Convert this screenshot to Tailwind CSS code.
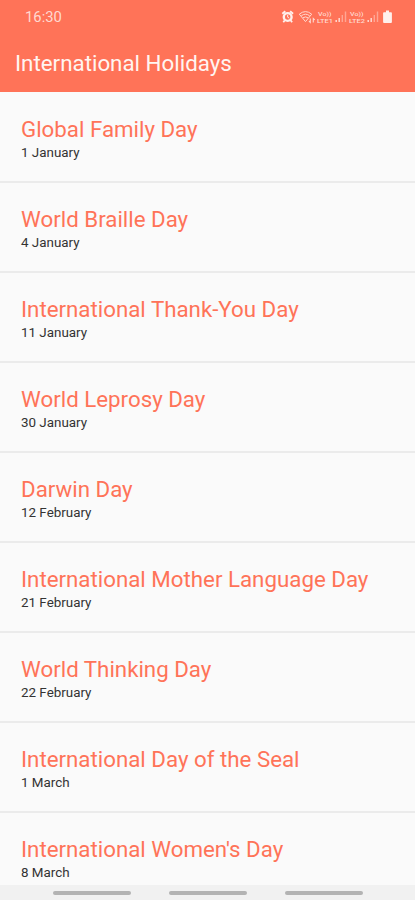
<!DOCTYPE html>
<html lang="en">
<head>
<meta charset="utf-8">
<title>International Holidays</title>
<script src="https://cdn.jsdelivr.net/npm/@tailwindcss/browser@4"></script>
</head>
<body class="h-[900px] overflow-hidden bg-[#fafafa] font-['Roboto',sans-serif]">
<div class="flex h-[900px] flex-col overflow-hidden">
<header class="h-[92px] shrink-0 bg-[#ff7358]">
  <div class="flex h-[34px] items-center justify-between pr-[22px] pl-[25px] text-[#ffd9d0]">
    <span class="text-[14.8px] leading-[34px]">16:30</span>
    <svg class="h-[34px] w-[112px]" viewBox="281 0 112 34" fill="none" stroke="currentColor">
      <g stroke="#fff0ec"><circle cx="287.7" cy="17" r="3.9" stroke-width="2.4"/><path d="M282.3 13.8l3-2.6M293.1 13.8l-3-2.6M284.8 20.3l-1.5 1.9M290.6 20.3l1.5 1.9" stroke-width="1.8"/><path d="M287.7 14.8v2.4l1.6 1" stroke-width="1"/></g>
      <path d="M299.3 14.2q6.2-5.2 12.4 0l-6.2 7.4z" stroke-width="1"/>
      <path d="M301.3 15.8q4.2-3.2 8.4 0M303 17.8q2.5-1.8 5 0" stroke-width="1"/>
      <path d="M310.3 18.5v4l-1.4-1.4M313.3 22.5v-4l1.4 1.4" stroke-width="1.1"/>
      <g fill="currentColor" stroke="none" font-family="Roboto, sans-serif" font-size="6" font-weight="500">
        <text x="318" y="15.8" textLength="13.5" lengthAdjust="spacingAndGlyphs">Vo))</text>
        <text x="317" y="22.9" textLength="16" lengthAdjust="spacingAndGlyphs">LTE1</text>
        <text x="350" y="15.8" textLength="13.5" lengthAdjust="spacingAndGlyphs">Vo))</text>
        <text x="349" y="22.9" textLength="16" lengthAdjust="spacingAndGlyphs">LTE2</text>
      </g>
      <path d="M336.2 22v-2M339.2 22v-4M368.2 22v-2M371.2 22v-4" stroke-width="1.5"/>
      <path d="M342.3 22v-7M345.5 22v-10.5M374.3 22v-7M377.5 22v-10.5" stroke-width="1.4" opacity=".5"/>
      <path d="M386 10.5h3v1.7h2q.9 0 .9.9v9q0 .9-.9.9h-7q-.9 0-.9-.9v-9q0-.9.9-.9h2z" fill="#fff0ec" stroke="none"/>
    </svg>
  </div>
  <h1 class="pt-[14px] pl-[15px] text-[22.35px] leading-[30px] whitespace-nowrap text-[#fff5f1]">International Holidays</h1>
</header>
<main class="min-h-0 flex-1 overflow-hidden pt-px text-[#ff7358]">
  <article class="h-[90px] border-b-2 border-[#ebebeb] pt-[22px] pl-[21px]"><h2 class="text-[22.3px] leading-[28px]">Global Family Day</h2><p class="pt-px text-[13.4px] leading-[18px] text-[#333]">1 January</p></article>
  <article class="h-[90px] border-b-2 border-[#ebebeb] pt-[22px] pl-[21px]"><h2 class="text-[22.3px] leading-[28px]">World Braille Day</h2><p class="pt-px text-[13.4px] leading-[18px] text-[#333]">4 January</p></article>
  <article class="h-[90px] border-b-2 border-[#ebebeb] pt-[22px] pl-[21px]"><h2 class="text-[22.3px] leading-[28px]">International Thank-You Day</h2><p class="pt-px text-[13.4px] leading-[18px] text-[#333]">11 January</p></article>
  <article class="h-[90px] border-b-2 border-[#ebebeb] pt-[22px] pl-[21px]"><h2 class="text-[22.3px] leading-[28px]">World Leprosy Day</h2><p class="pt-px text-[13.4px] leading-[18px] text-[#333]">30 January</p></article>
  <article class="h-[90px] border-b-2 border-[#ebebeb] pt-[22px] pl-[21px]"><h2 class="text-[22.3px] leading-[28px]">Darwin Day</h2><p class="pt-px text-[13.4px] leading-[18px] text-[#333]">12 February</p></article>
  <article class="h-[90px] border-b-2 border-[#ebebeb] pt-[22px] pl-[21px]"><h2 class="text-[22.3px] leading-[28px]">International Mother Language Day</h2><p class="pt-px text-[13.4px] leading-[18px] text-[#333]">21 February</p></article>
  <article class="h-[90px] border-b-2 border-[#ebebeb] pt-[22px] pl-[21px]"><h2 class="text-[22.3px] leading-[28px]">World Thinking Day</h2><p class="pt-px text-[13.4px] leading-[18px] text-[#333]">22 February</p></article>
  <article class="h-[90px] border-b-2 border-[#ebebeb] pt-[22px] pl-[21px]"><h2 class="text-[22.3px] leading-[28px]">International Day of the Seal</h2><p class="pt-px text-[13.4px] leading-[18px] text-[#333]">1 March</p></article>
  <article class="h-[90px] pt-[22px] pl-[21px]"><h2 class="text-[22.3px] leading-[28px]">International Women's Day</h2><p class="pt-px text-[13.4px] leading-[18px] text-[#333]">8 March</p></article>
</main>
<nav class="flex h-[15px] shrink-0 gap-[38px] bg-[#f1f1f1] pt-[6px] pl-[53px]">
  <span class="h-1 w-[78px] rounded-full bg-[#b3b3b3]"></span>
  <span class="h-1 w-[78px] rounded-full bg-[#b3b3b3]"></span>
  <span class="h-1 w-[78px] rounded-full bg-[#b3b3b3]"></span>
</nav>
</div>
</body>
</html>
